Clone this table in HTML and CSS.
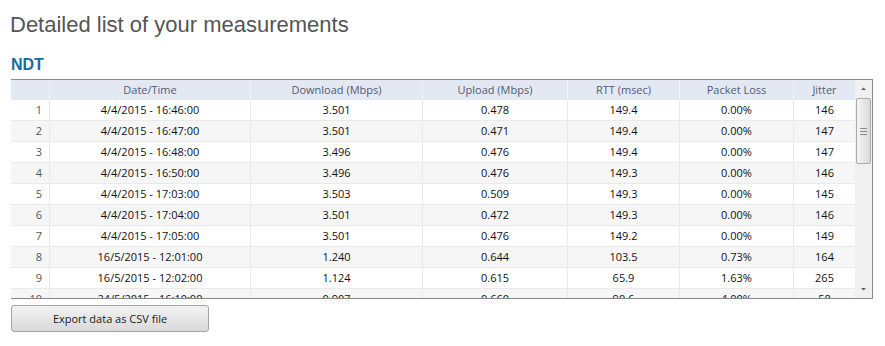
FILE: index.html
```html
<!DOCTYPE html>
<html>
<head>
<meta charset="utf-8">
<link rel="stylesheet" href="styles.css">
</head>
<body>
<div class="page">
  <h1 class="title">Detailed list of your measurements</h1>
  <h2 class="section">NDT</h2>
  <div class="grid">
    <div class="viewport">
      <table class="data">
        <colgroup>
          <col class="c-idx"><col class="c-date"><col class="c-dl"><col class="c-ul"><col class="c-rtt"><col class="c-pl"><col class="c-jit">
        </colgroup>
        <thead>
          <tr><th></th><th>Date/Time</th><th>Download (Mbps)</th><th>Upload (Mbps)</th><th>RTT (msec)</th><th>Packet Loss</th><th>Jitter</th></tr>
        </thead>
        <tbody>
          <tr><td class="idx">1</td><td>4/4/2015 - 16:46:00</td><td>3.501</td><td>0.478</td><td>149.4</td><td>0.00%</td><td>146</td></tr>
          <tr><td class="idx">2</td><td>4/4/2015 - 16:47:00</td><td>3.501</td><td>0.471</td><td>149.4</td><td>0.00%</td><td>147</td></tr>
          <tr><td class="idx">3</td><td>4/4/2015 - 16:48:00</td><td>3.496</td><td>0.476</td><td>149.4</td><td>0.00%</td><td>147</td></tr>
          <tr><td class="idx">4</td><td>4/4/2015 - 16:50:00</td><td>3.496</td><td>0.476</td><td>149.3</td><td>0.00%</td><td>146</td></tr>
          <tr><td class="idx">5</td><td>4/4/2015 - 17:03:00</td><td>3.503</td><td>0.509</td><td>149.3</td><td>0.00%</td><td>145</td></tr>
          <tr><td class="idx">6</td><td>4/4/2015 - 17:04:00</td><td>3.501</td><td>0.472</td><td>149.3</td><td>0.00%</td><td>146</td></tr>
          <tr><td class="idx">7</td><td>4/4/2015 - 17:05:00</td><td>3.501</td><td>0.476</td><td>149.2</td><td>0.00%</td><td>149</td></tr>
          <tr><td class="idx">8</td><td>16/5/2015 - 12:01:00</td><td>1.240</td><td>0.644</td><td>103.5</td><td>0.73%</td><td>164</td></tr>
          <tr><td class="idx">9</td><td>16/5/2015 - 12:02:00</td><td>1.124</td><td>0.615</td><td>65.9</td><td>1.63%</td><td>265</td></tr>
          <tr><td class="idx">10</td><td>24/5/2015 - 16:10:00</td><td>0.907</td><td>0.660</td><td>90.6</td><td>4.00%</td><td>58</td></tr>
        </tbody>
      </table>
    </div>
    <div class="scrollbar">
      <svg class="arrow" width="17" height="17" viewBox="0 0 17 17"><path d="M6 10 L11 10 L8.5 7.5 Z" fill="#606060"/></svg>
      <div class="track">
        <div class="thumb">
          <span class="grip"></span><span class="grip"></span><span class="grip"></span>
        </div>
      </div>
      <svg class="arrow" width="17" height="17" viewBox="0 0 17 17"><path d="M6 7 L11 7 L8.5 9.5 Z" fill="#606060"/></svg>
    </div>
  </div>
  <button class="export">Export data as CSV file</button>
</div>
</body>
</html>
```

FILE: styles.css
```css
html, body {
  margin: 0;
  padding: 0;
  background: #ffffff;
}
.page {
  padding: 11px 0 0 11px;
  width: 862px;
}
.title {
  margin: 0 0 0 -1px;
  font-family: "Liberation Sans", Arial, sans-serif;
  font-weight: normal;
  font-size: 22px;
  line-height: 28px;
  color: #555555;
}
.section {
  margin: 16px 0 4px 0;
  font-family: "Liberation Sans", Arial, sans-serif;
  font-weight: bold;
  font-size: 16px;
  line-height: 20px;
  color: #1a6aa0;
}
.grid {
  display: flex;
  width: 861px;
  height: 218px;
  border-top: 1px solid #8a8a8a;
  border-bottom: 1px solid #8a8a8a;
  border-right: 1px solid #8a8a8a;
}
.viewport {
  width: 844px;
  height: 218px;
  overflow: hidden;
}
.data {
  width: 844px;
  border-collapse: separate;
  border-spacing: 0;
  table-layout: fixed;
  font-family: "Open Sans", sans-serif;
  font-size: 11px;
}
.c-idx { width: 38px; }
.c-date { width: 201px; }
.c-dl { width: 172px; }
.c-ul { width: 145px; }
.c-rtt { width: 112px; }
.c-pl { width: 114px; }
.c-jit { width: 62px; }
.data th {
  height: 20px;
  padding: 0;
  line-height: 20px;
  background: #e3e8f3;
  color: #4f5d72;
  font-weight: normal;
  text-align: center;
  border-left: 1px solid #f1f3f8;
}
.data th:first-child { border-left: none; }
.data td {
  height: 20px;
  padding: 0;
  line-height: 20px;
  text-align: center;
  color: #111111;
  border-bottom: 1px solid #eaeaea;
  border-left: 1px solid #eaeaea;
}
.data td.idx {
  border-left: none;
  text-align: right;
  padding-right: 7px;
  color: #555555;
}
.data tbody tr:nth-child(even) td {
  background: #f6f6f6;
}
.scrollbar {
  width: 17px;
  background: #f0f0f0;
  display: flex;
  flex-direction: column;
}
.arrow {
  display: block;
  flex: none;
}
.track {
  flex: 1;
  padding: 1px 1px 0 1px;
}
.thumb {
  height: 64px;
  border: 1px solid #a9a9a9;
  border-radius: 2px;
  background: linear-gradient(to right, #f4f4f4, #e4e4e4 60%, #dadada);
  display: flex;
  flex-direction: column;
  align-items: center;
  justify-content: center;
  gap: 2px;
}
.grip {
  display: block;
  width: 7px;
  height: 1px;
  background: #8a8a8a;
}
.export {
  display: block;
  margin-top: 6px;
  width: 198px;
  height: 27px;
  padding: 0;
  border: 1px solid #a3a3a3;
  border-radius: 3px;
  background: linear-gradient(to bottom, #f3f3f3, #e6e6e6 50%, #d9d9d9);
  font-family: "Open Sans", sans-serif;
  font-size: 11px;
  color: #1a1a1a;
}
```
